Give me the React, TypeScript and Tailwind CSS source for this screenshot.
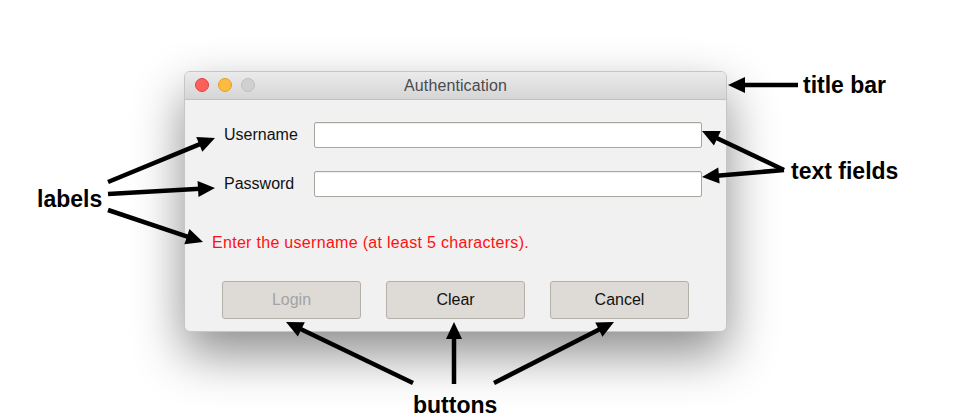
import React from "react";

const Arrow = ({ x1, y1, x2, y2 }: { x1: number; y1: number; x2: number; y2: number }) => {
  const dx = x2 - x1;
  const dy = y2 - y1;
  const len = Math.hypot(dx, dy);
  const ux = dx / len;
  const uy = dy / len;
  const headLen = 17;
  const headW = 8;
  const bx = x2 - ux * headLen;
  const by = y2 - uy * headLen;
  const px = -uy;
  const py = ux;
  return (
    <g>
      <line x1={x1} y1={y1} x2={bx + ux * 2} y2={by + uy * 2} stroke="#000" strokeWidth={4.5} strokeLinecap="butt" />
      <polygon
        points={`${x2},${y2} ${bx + px * headW},${by + py * headW} ${bx - px * headW},${by - py * headW}`}
        fill="#000"
      />
    </g>
  );
};

export default function App() {
  const font = { fontFamily: '"Liberation Sans", Arial, Helvetica, sans-serif' };
  return (
    <div className="relative w-[963px] h-[418px] bg-white overflow-hidden" style={font}>
      <div className="pt-[71px] pl-[184px]">
        <div className="w-[543px] h-[261px] rounded-[6px] bg-[#f1f1f1] border border-[#c6c6c6] shadow-[0_22px_50px_rgba(0,0,0,0.45)] overflow-hidden flex flex-col">
          <div className="relative h-[28px] shrink-0 bg-gradient-to-b from-[#ebebeb] to-[#d5d5d5] border-b border-[#c2c2c2] flex items-center justify-center">
            <div className="absolute left-[10px] top-[6px] flex gap-[9px]">
              <span className="w-[14px] h-[14px] rounded-full bg-[#fc605b] border border-[#e0443e]" />
              <span className="w-[14px] h-[14px] rounded-full bg-[#fdbc40] border border-[#dea123]" />
              <span className="w-[14px] h-[14px] rounded-full bg-[#d0d0d0] border border-[#c0c0c0]" />
            </div>
            <span className="text-[16px] text-[#4b4b4b] tracking-[0.1px]">Authentication</span>
          </div>
          <div className="flex-1 flex flex-col pt-[22px]">
            <div className="flex items-center pl-[39px]">
              <span className="w-[90px] text-[16px] text-[#111]">Username</span>
              <div className="w-[388px] h-[26px] bg-white border border-[#aaa69f] rounded-[2px] shadow-[inset_0_1px_1px_rgba(0,0,0,0.08)]" />
            </div>
            <div className="flex items-center pl-[39px] mt-[23px]">
              <span className="w-[90px] text-[16px] text-[#111]">Password</span>
              <div className="w-[388px] h-[26px] bg-white border border-[#aaa69f] rounded-[2px] shadow-[inset_0_1px_1px_rgba(0,0,0,0.08)]" />
            </div>
            <div className="pl-[27px] mt-[36px] text-[16px] text-[#ff1010] tracking-[0.3px] leading-[20px]">
              Enter the username (at least 5 characters).
            </div>
            <div className="flex gap-[25px] pl-[37px] mt-[28px]">
              <div className="w-[139px] h-[38px] bg-[#dedbd6] border border-[#b3b0aa] rounded-[3px] flex items-center justify-center text-[16px] text-[#a3a3a3]">
                Login
              </div>
              <div className="w-[139px] h-[38px] bg-[#dedbd6] border border-[#b3b0aa] rounded-[3px] flex items-center justify-center text-[16px] text-[#111]">
                Clear
              </div>
              <div className="w-[139px] h-[38px] bg-[#dedbd6] border border-[#b3b0aa] rounded-[3px] flex items-center justify-center text-[16px] text-[#111]">
                Cancel
              </div>
            </div>
          </div>
        </div>
      </div>

      <svg className="absolute inset-0 pointer-events-none" width={963} height={418}>
        <Arrow x1={798} y1={85} x2={728} y2={85} />
        <Arrow x1={108} y1={182} x2={215} y2={138} />
        <Arrow x1={108} y1={194} x2={215} y2={188} />
        <Arrow x1={108} y1={210} x2={203} y2={242} />
        <Arrow x1={784} y1={170} x2={702} y2={131} />
        <Arrow x1={784} y1={170} x2={702} y2={177} />
        <Arrow x1={413} y1={383} x2={286} y2={322} />
        <Arrow x1={454} y1={384} x2={454} y2={322} />
        <Arrow x1={494} y1={383} x2={614} y2={322} />
      </svg>

      <span className="absolute left-[37px] top-[185px] text-[23px] font-bold text-black leading-[28px]">labels</span>
      <span className="absolute left-[803px] top-[71px] text-[23px] font-bold text-black leading-[28px]">title bar</span>
      <span className="absolute left-[791px] top-[157px] text-[23px] font-bold text-black leading-[28px]">text fields</span>
      <span className="absolute left-[413px] top-[391px] text-[23px] font-bold text-black leading-[28px]">buttons</span>
    </div>
  );
}
